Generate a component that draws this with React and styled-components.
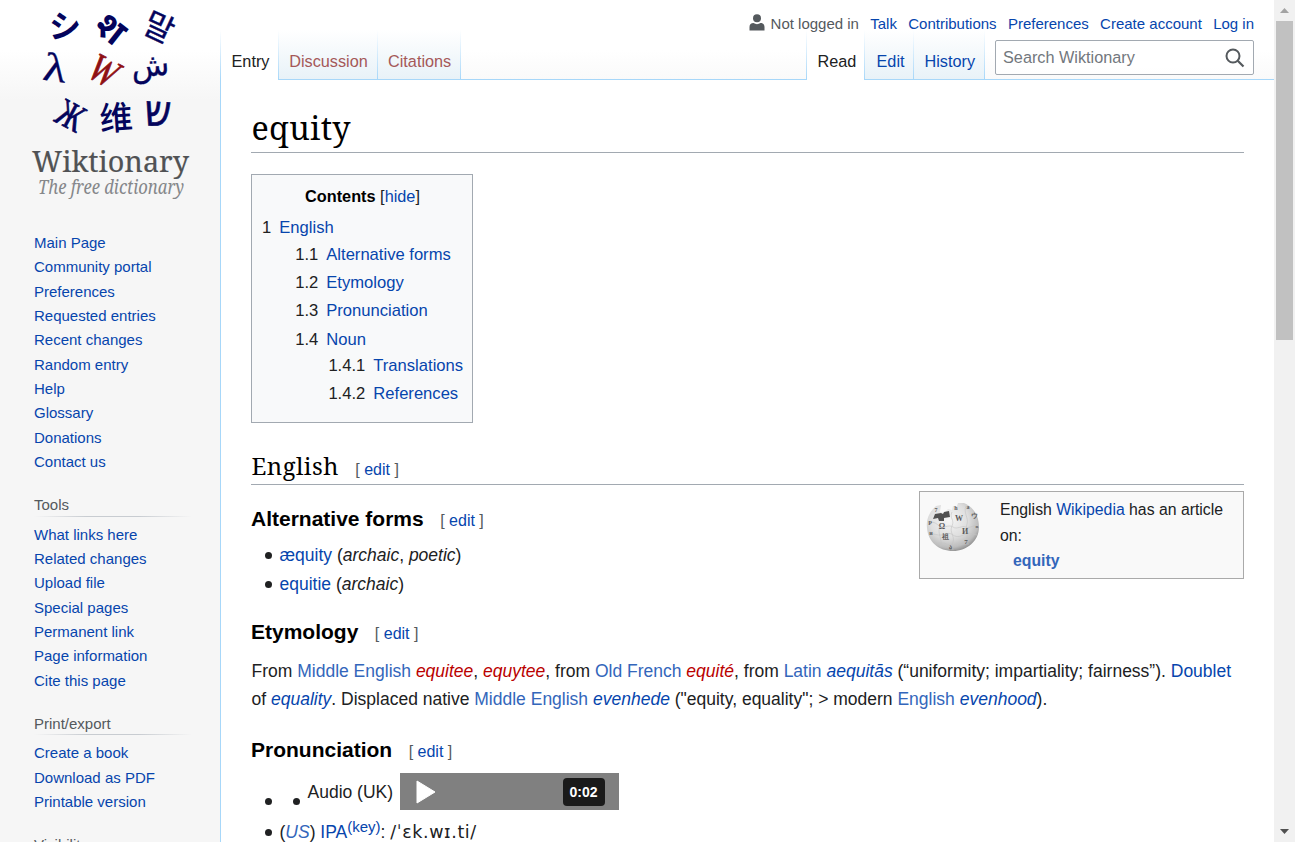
import React from 'react';
import styled, { createGlobalStyle } from 'styled-components';

const Global = createGlobalStyle`
  * { box-sizing: border-box; }
  html, body { margin: 0; height: 842px; overflow: hidden; background: #f6f6f6; }
  body { font-family: "Liberation Sans", Arial, sans-serif; color: #202122; }
`;

const Shell = styled.div`
  display: flex;
  width: 1295px;
  height: 842px;
  overflow: hidden;
`;
const Page = styled.div`
  display: flex;
  width: 1274px;
  height: 842px;
  background: linear-gradient(#fff 50%, #f6f6f6 100%) 0 0 / 100% 100px no-repeat #f6f6f6;
`;

const Link = styled.a`
  color: ${(p) => p.$c || '#0645ad'};
  text-decoration: none;
  font-weight: ${(p) => (p.$bold ? 700 : 'inherit')};
  font-style: ${(p) => (p.$it ? 'italic' : 'inherit')};
`;

const Sidebar = styled.aside`
  width: 220px;
  flex: none;
  height: 842px;
  overflow: hidden;
`;
const LogoBox = styled.div`
  height: 230.95px;
`;
const NavHeading = styled.h3`
  margin: 0 28px 6px 34px;
  height: 42.2px;
  padding-top: 20px;
  font-weight: 400;
  font-size: 15px;
  line-height: 21px;
  color: #54595d;
  background: linear-gradient(to right, rgba(200, 204, 209, 0), #c8ccd1 33%, #c8ccd1 66%, rgba(200, 204, 209, 0)) 0 100% / 100% 1px no-repeat;
`;
const NavList = styled.ul`
  list-style: none;
  margin: 0;
  padding: 0 0 0 34px;
`;
const NavItem = styled.li`
  height: 24.35px;
  line-height: 24.35px;
  font-size: 15px;
`;

const Main = styled.div`
  flex: 1;
  display: flex;
  flex-direction: column;
`;
const Head = styled.header`
  height: 79px;
  position: relative;
`;
const Personal = styled.div`
  position: relative;
  z-index: 1;
  display: flex;
  justify-content: flex-end;
  align-items: center;
  height: 30px;
  padding: 17px 20px 0 0;
  gap: 11.3px;
  font-size: 15px;
  line-height: 18px;
  white-space: nowrap;
`;
const Anon = styled.span`
  display: flex;
  align-items: center;
  gap: 6px;
  color: #54595d;
  svg { margin-top: -3px; }
`;
const TabRow = styled.div`
  display: flex;
  height: 50px;
`;
const Tab = styled.div`
  width: ${(p) => p.$w}px;
  height: ${(p) => (p.$on ? 50 : 49)}px;
  padding: 21px 0 0 ${(p) => p.$pl || 10.5}px;
  font-size: 16.25px;
  line-height: 20px;
  white-space: nowrap;
  color: ${(p) => p.$c || '#0645ad'};
  background:
    linear-gradient(#fff, #a7d7f9) 100% 0 / 1px 100% no-repeat,
    ${(p) => (p.$on ? 'linear-gradient(#fff, #fff)' : 'linear-gradient(#fff 0%, #e8f2f8 100%)')};
`;
const Edge = styled.div`
  width: 1px;
  height: 50px;
  background: linear-gradient(#fff, #a7d7f9);
`;
const Spacer = styled.div`
  flex: 1;
`;
const Search = styled.div`
  display: flex;
  align-items: center;
  justify-content: space-between;
  margin: 10px 20px 0 10px;
  width: 259px;
  height: 35px;
  padding: 0 8px 0 7px;
  font-size: 16.25px;
  color: #72777d;
  background: rgba(255, 255, 255, 0.8);
  border: 1px solid #a2a9b1;
  border-radius: 2px;
`;

const Content = styled.main`
  flex: 1;
  background: #fff;
  border: 1px solid #a7d7f9;
  border-width: 1px 0 0 1px;
  padding: 25px 30px 0;
  font-size: 17.5px;
  line-height: 28px;
`;
const Title = styled.h1`
  margin: 0 0 21px;
  height: 48px;
  padding-left: 0.5px;
  font: 400 32.3px/45px "Noto Serif", "Liberation Serif", serif;
  letter-spacing: 0.3px;
  color: #000;
  border-bottom: 1px solid #a2a9b1;
`;
const Toc = styled.nav`
  width: 222px;
  height: 249px;
  padding: 6px 9px 0 10px;
  background: #f8f9fa;
  border: 1px solid #a2a9b1;
  font-size: 16.6px;
`;
const TocTitle = styled.div`
  height: 33px;
  line-height: 31px;
  text-align: center;
  font-size: 16.3px;
  b { color: #000; }
`;
const TocRow = styled.div`
  display: flex;
  gap: 8px;
  height: ${(p) => p.$h}px;
  line-height: 28px;
  padding-left: ${(p) => (p.$level || 0) * 33.2}px;
  white-space: nowrap;
`;
const Section = styled.h2`
  display: flex;
  align-items: baseline;
  margin: 22px 0 0;
  height: 40px;
  padding-left: 0.5px;
  font: 400 23.9px/42px "Noto Serif", "Liberation Serif", serif;
  letter-spacing: 0.45px;
  color: #000;
  border-bottom: 1px solid #a2a9b1;
`;
const SubSection = styled.h3`
  display: flex;
  align-items: baseline;
  margin: ${(p) => p.$mt || 13}px 0 0;
  height: 42px;
  font-size: 21px;
  line-height: 41px;
  color: #000;
`;
const EditMark = styled.span`
  margin-left: 16.5px;
  font: 400 16px "Liberation Sans", sans-serif;
  letter-spacing: 0;
  color: #54595d;
`;
const List = styled.ul`
  list-style: none;
  margin: 0;
  padding: 0;
`;
const Item = styled.li`
  display: flex;
  align-items: center;
  height: ${(p) => p.$h || 29}px;
  padding-left: 14px;
  white-space: pre;
`;
const Bullet = styled.i`
  width: 7px;
  height: 7px;
  margin: ${(p) => p.$mt || 2}px ${(p) => p.$mr || 7.5}px 0 0;
  border-radius: 50%;
  background: #202122;
`;
const Para = styled.p`
  margin: 4px 0 0;
  padding-left: 0.5px;
`;
const ParaLine = styled.span`
  display: block;
  white-space: nowrap;
`;
const WikiBox = styled.aside`
  float: right;
  display: flex;
  width: 325px;
  height: 88px;
  margin-top: 6px;
  padding: 5px 0 0 6px;
  background: #f9f9f9;
  border: 1px solid #aaa;
  font-size: 15.8px;
  line-height: 25.5px;
`;
const GlobeSlot = styled.div`
  height: 57px;
  padding-top: 4px;
  line-height: 0;
`;
const WikiText = styled.div`
  margin-left: 20px;
  white-space: nowrap;
`;
const WikiTarget = styled.div`
  padding-left: 13px;
`;
const Player = styled.div`
  display: flex;
  align-items: center;
  justify-content: space-between;
  width: 219px;
  height: 37px;
  margin-left: 6.5px;
  padding: 0 14px 0 16px;
  background: #808080;
`;
const Duration = styled.span`
  width: 42px;
  height: 28px;
  border-radius: 4px;
  background: #1a1a1a;
  color: #fff;
  font-size: 14px;
  font-weight: 700;
  line-height: 28px;
  text-align: center;
`;
const Key = styled.sup`
  font-size: 15px;
  line-height: 1;
  vertical-align: 6px;
`;
const Ipa = styled.span`
  font-family: "DejaVu Sans", sans-serif;
  letter-spacing: 0.6px;
`;

const ScrollTrack = styled.div`
  display: flex;
  flex-direction: column;
  align-items: center;
  width: 21px;
  height: 842px;
  background: #f1f1f1;
`;
const ScrollButton = styled.div`
  display: flex;
  align-items: center;
  height: 21px;
`;
const ScrollThumb = styled.div`
  width: 17px;
  height: 319px;
  background: #c1c1c1;
`;

const glyphs = [
  { t: 'シ', x: 65, y: 24, s: 32, r: 2, f: 'Noto Sans CJK JP', w: 700 },
  { t: 'श', x: 112, y: 27, s: 37, r: 38, f: 'Noto Sans', w: 700 },
  { t: '말', x: 160, y: 25, s: 32, r: 25, f: 'Noto Sans CJK KR', w: 400, k: 0.4 },
  { t: 'λ', x: 55, y: 68, s: 40, r: 8, sx: 1.2, f: 'Liberation Serif', w: 400, k: 0.3 },
  { t: 'W', x: 104, y: 70, s: 40, r: 28, sx: 0.82, f: 'Liberation Serif', w: 400, c: '#8f1014', i: true, k: 0.8 },
  { t: 'ش', x: 150, y: 65, s: 31, r: -4, f: 'DejaVu Sans', w: 400, k: 0.3 },
  { t: 'Ж', x: 71, y: 115, s: 39, r: 28, sx: 0.75, f: 'Liberation Serif', w: 400, k: 0.8 },
  { t: '维', x: 116, y: 116, s: 33, r: -4, f: 'Noto Sans CJK SC', w: 500 },
  { t: 'ש', x: 158, y: 111, s: 44, r: 3, sx: 0.85, f: 'DejaVu Sans', w: 400, k: 0.6 },
];

const Logo = () => (
  <svg width="220" height="215" viewBox="0 0 220 215">
    {glyphs.map((g) => (
      <text key={g.t} transform={`translate(${g.x} ${g.y}) rotate(${g.r}) scale(${g.sx || 1} 1)`} textAnchor="middle" dominantBaseline="central"
        fontFamily={g.f} fontSize={g.s} fontWeight={g.w} fontStyle={g.i ? 'italic' : 'normal'} fill={g.c || '#04045c'} stroke={g.c || '#04045c'} strokeWidth={g.k || 0}>{g.t}</text>
    ))}
    <text x="32" y="172" fontFamily="Noto Serif, Liberation Serif, serif" fontSize="28.5" fill="#505254" stroke="#505254" strokeWidth="0.2" textLength="157" lengthAdjust="spacingAndGlyphs">Wiktionary</text>
    <text x="38" y="194" fontFamily="Noto Serif, Liberation Serif, serif" fontStyle="italic" fontSize="20" fill="#85878a" textLength="146" lengthAdjust="spacingAndGlyphs">The free dictionary</text>
  </svg>
);

const UserIcon = () => (
  <svg width="16" height="17" viewBox="0 0 16 17" fill="#54595d">
    <circle cx="8" cy="4.3" r="4" />
    <path d="M0.500 16.500v-3.500c0-2.600 1.500-4 4-4 2 1.500 5 1.500 7 0 2.500 0 4 1.400 4 4v3.500z" />
  </svg>
);

const Globe = () => (
  <svg width="54" height="52" viewBox="0 0 54 52">
    <defs>
      <radialGradient id="ball" cx="0.42" cy="0.35" r="0.68">
        <stop offset="0" stopColor="#f6f6f6" />
        <stop offset="0.55" stopColor="#dedede" />
        <stop offset="0.85" stopColor="#bcbcbc" />
        <stop offset="1" stopColor="#8c8c8c" />
      </radialGradient>
    </defs>
    <path d="M10 5C3 11 0 19 1 27c1 14 12 23 26 23s26-10 26-24C53 14 47 6 38 2l-6 0-1 3-4 0-1 4-4-1-4 4-4-1 1-7z" fill="url(#ball)" />
    <path d="M9 13l6-1 2 1 1-2 5-1 1 6-6 1 0 3-5 0-1-3-5 1z" fill="#505050" />
    <path d="M2 22c5-2 8 0 11 3s10-2 14 1 9-2 13 0 8-3 13-1M3 33c5-1 9 2 13 1s7-3 11 0 9 1 12-1 8 0 12 1M9 43c6-2 10-1 14 1s10-2 20-1M26 11c-3 6 3 8 0 14s3 10 1 16 0 6 0 8M40 5c-3 7 3 12 1 18s2 12-1 18M14 25c-3 7 2 12 1 20" fill="none" stroke="#c2c2c2" strokeWidth="0.6" />
    <g fill="#5c5c5c" fontFamily="Liberation Serif, serif" fontWeight="700" fontSize="8" textAnchor="middle">
      <text x="16" y="27.500">Ω</text><text x="33" y="20">W</text><text x="39" y="33">И</text>
      <text x="19" y="38" fontSize="7">祖</text><text x="4" y="24" fontSize="6">P</text><text x="5" y="34" fontSize="6">и</text>
      <text x="48" y="17" fontSize="7">ウ</text><text x="40" y="43" fontSize="7">7</text><text x="24" y="48" fontSize="6">ა</text>
      <text x="42" y="8" fontSize="6">a</text><text x="10" y="11" fontSize="6">7</text><text x="30" y="9" fontSize="6">h</text><text x="51" y="27" fontSize="5">n</text>
    </g>
  </svg>
);

const Edit = () => <EditMark>[ <Link>edit</Link> ]</EditMark>;
const Nav = ({ items }) => <NavList>{items.map((i) => <NavItem key={i}><Link>{i}</Link></NavItem>)}</NavList>;

const toc = [
  ['1', 'English', 27, 0], ['1.1', 'Alternative forms', 28, 1], ['1.2', 'Etymology', 28, 1], ['1.3', 'Pronunciation', 29, 1],
  ['1.4', 'Noun', 26, 1], ['1.4.1', 'Translations', 28, 2], ['1.4.2', 'References', 28, 2],
];
const wp = '#3366bb';
const red = '#ba0000';

export default function App() {
  return (
    <Shell>
      <Global />
      <Page>
        <Sidebar>
          <LogoBox><Logo /></LogoBox>
          <Nav items={['Main Page', 'Community portal', 'Preferences', 'Requested entries', 'Recent changes', 'Random entry', 'Help', 'Glossary', 'Donations', 'Contact us']} />
          <NavHeading>Tools</NavHeading>
          <Nav items={['What links here', 'Related changes', 'Upload file', 'Special pages', 'Permanent link', 'Page information', 'Cite this page']} />
          <NavHeading>Print/export</NavHeading>
          <Nav items={['Create a book', 'Download as PDF', 'Printable version']} />
          <NavHeading>Visibility</NavHeading>
        </Sidebar>
        <Main>
          <Head>
            <Personal>
              <Anon><UserIcon />Not logged in</Anon>
              <Link>Talk</Link><Link>Contributions</Link><Link>Preferences</Link><Link>Create account</Link><Link>Log in</Link>
            </Personal>
            <TabRow>
              <Edge />
              <Tab $w={58} $on $c="#202122">Entry</Tab>
              <Tab $w={99} $c="#a55858" $pl={10.2}>Discussion</Tab>
              <Tab $w={83} $c="#a55858" $pl={10}>Citations</Tab>
              <Spacer />
              <Edge />
              <Tab $w={58} $on $c="#202122">Read</Tab>
              <Tab $w={49} $pl={11.5}>Edit</Tab>
              <Tab $w={71}>History</Tab>
              <Search>
                Search Wiktionary
                <svg width="20" height="20" viewBox="0 0 20 20" fill="none" stroke="#54595d" strokeWidth="2"><circle cx="8" cy="8" r="6.500" /><path d="M12.700 12.700l5.800 5.800" strokeWidth="2.200" /></svg>
              </Search>
            </TabRow>
          </Head>
          <Content>
            <Title>equity</Title>
            <Toc>
              <TocTitle><b>Contents</b> [<Link>hide</Link>]</TocTitle>
              {toc.map(([n, t, h, l]) => <TocRow key={n} $h={h} $level={l}><span>{n}</span><Link>{t}</Link></TocRow>)}
            </Toc>
            <Section>English<Edit /></Section>
            <WikiBox>
              <GlobeSlot><Globe /></GlobeSlot>
              <WikiText>
                <div>English <Link>Wikipedia</Link> has an article</div>
                <div>on:</div>
                <WikiTarget><Link $c={wp} $bold>equity</Link></WikiTarget>
              </WikiText>
            </WikiBox>
            <SubSection>Alternative forms<Edit /></SubSection>
            <List>
              <Item><Bullet /><span><Link>æquity</Link> (<i>archaic</i>, <i>poetic</i>)</span></Item>
              <Item><Bullet /><span><Link>equitie</Link> (<i>archaic</i>)</span></Item>
            </List>
            <SubSection>Etymology<Edit /></SubSection>
            <Para>
              <ParaLine>From <Link $c={wp}>Middle English</Link> <Link $c={red} $it>equitee</Link>, <Link $c={red} $it>equytee</Link>, from <Link $c={wp}>Old French</Link> <Link $c={red} $it>equité</Link>, from <Link $c={wp}>Latin</Link> <Link $it>aequitās</Link> (“uniformity; impartiality; fairness”). <Link>Doublet</Link></ParaLine>
              <ParaLine>of <Link $it>equality</Link>. Displaced native <Link $c={wp}>Middle English</Link> <Link $it>evenhede</Link> ("equity, equality"; &gt; modern <Link $c={wp}>English</Link> <Link $it>evenhood</Link>).</ParaLine>
            </Para>
            <SubSection $mt={16}>Pronunciation<Edit /></SubSection>
            <List>
              <Item $h={41}><Bullet $mt={20} $mr={21} /><Bullet $mt={20} />Audio (UK)<Player>
                <svg width="20" height="24" viewBox="0 0 20 24" fill="#fff" stroke="#fff" strokeLinejoin="round"><path d="M1 1v22L19 12z" /></svg>
                <Duration>0:02</Duration>
              </Player></Item>
              <Item $h={39}><Bullet $mt={1} /><span>(<Link $c={wp} $it>US</Link>) <Link>IPA</Link><Key><Link>(key)</Link></Key>: <Ipa>/ˈɛk.wɪ.ti/</Ipa></span></Item>
            </List>
          </Content>
        </Main>
      </Page>
      <ScrollTrack>
        <ScrollButton><svg width="9" height="5" viewBox="0 0 9 5"><path d="M0 5h9L4.500 0z" fill="#a3a3a3" /></svg></ScrollButton>
        <ScrollThumb />
        <Spacer />
        <ScrollButton><svg width="9" height="5" viewBox="0 0 9 5"><path d="M0 0h9L4.500 5z" fill="#505050" /></svg></ScrollButton>
      </ScrollTrack>
    </Shell>
  );
}
